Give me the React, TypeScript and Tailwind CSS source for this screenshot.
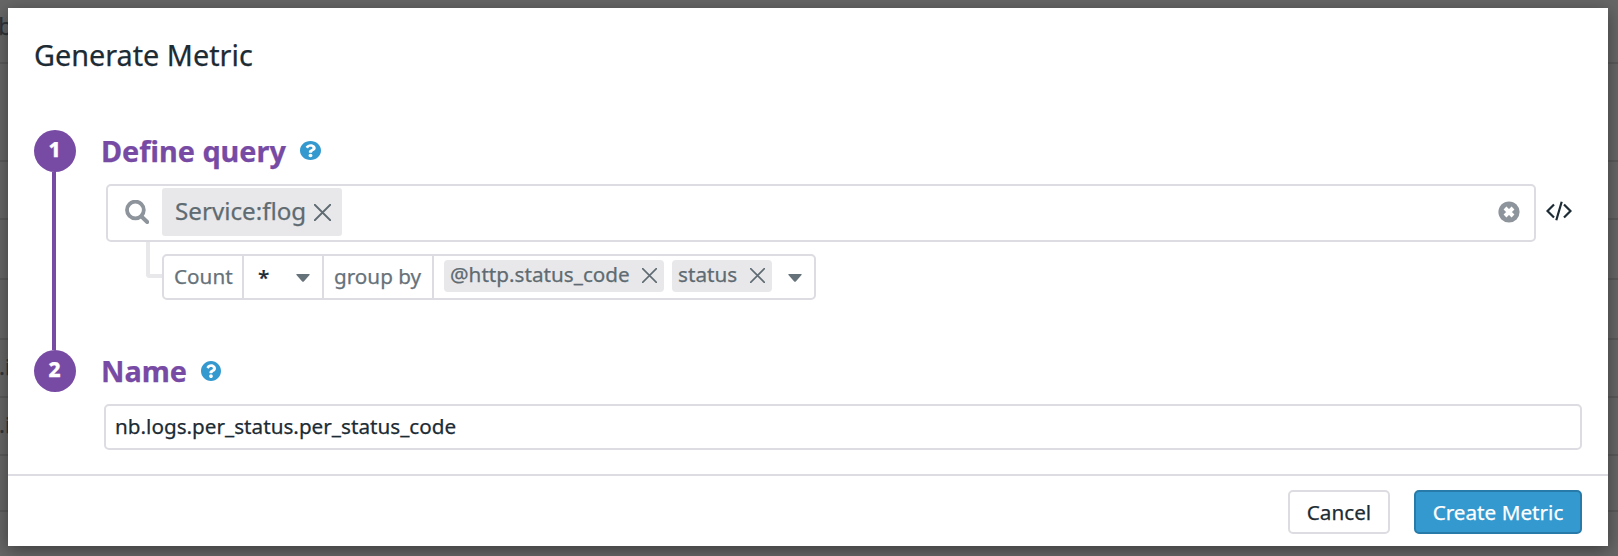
import type { ReactNode } from "react";

function Close({ className }: { className: string }) {
  return (
    <svg viewBox="0 0 16 16" className={className} fill="none" stroke="#5f6b72" strokeWidth="1.7" strokeLinecap="round">
      <path d="M0.7 0.7 15.3 15.3M15.3 0.7 0.7 15.3" />
    </svg>
  );
}

function Caret({ className }: { className: string }) {
  return (
    <svg viewBox="0 0 14 8" className={className} fill="#66727a">
      <path d="M1 0h12q1.3 0 .5 1L8 7.3q-1 1-2 0L.5 1Q-.3 0 1 0z" />
    </svg>
  );
}

function Help({ className }: { className: string }) {
  return (
    <svg viewBox="8 8 496 496" preserveAspectRatio="none" className={className} fill="#3399cf">
      <path d="M504 256c0 136.997-111.043 248-248 248S8 392.997 8 256C8 119.083 119.043 8 256 8s248 111.083 248 248zM262.655 90c-54.497 0-89.255 22.957-116.549 63.758-3.536 5.286-2.353 12.415 2.715 16.258l34.699 26.31c5.205 3.947 12.621 3.008 16.665-2.122 17.864-22.658 30.113-35.797 57.303-35.797 20.429 0 45.698 13.148 45.698 32.958 0 14.976-12.363 22.667-32.534 33.976C247.128 238.528 216 254.941 216 296v4c0 6.627 5.373 12 12 12h56c6.627 0 12-5.373 12-12v-1.333c0-28.462 83.186-29.647 83.186-106.667 0-58.002-60.165-102-116.531-102zM256 338c-25.365 0-46 20.635-46 46 0 25.364 20.635 46 46 46s46-20.636 46-46c0-25.365-20.635-46-46-46z" />
    </svg>
  );
}

function Step({ n, children }: { n: string; children?: ReactNode }) {
  return (
    <div className="flex w-[42px] shrink-0 flex-col items-center">
      <div className="flex h-[42px] w-[42px] shrink-0 items-center justify-center rounded-full bg-[#774aa4] pb-[4px] pr-[1px] text-[21px] font-extrabold leading-none text-white">
        {n}
      </div>
      {children}
    </div>
  );
}

export default function App() {
  return (
    <div className="relative h-[556px] w-full overflow-hidden bg-[#666666] p-2 font-['Noto_Sans',sans-serif] text-[#1c2b34] [-webkit-text-stroke:0.25px]">
      <div className="absolute inset-0 text-[24px] text-[#2f3438]">
        <div className="absolute left-0 top-[62px] h-[2px] w-full bg-[#5a5a5a]" />
        <div className="absolute left-0 top-[160px] h-[2px] w-full bg-[#5a5a5a]" />
        <div className="absolute left-0 top-[218px] h-[2px] w-full bg-[#5a5a5a]" />
        <div className="absolute left-0 top-[278px] h-[2px] w-full bg-[#5a5a5a]" />
        <div className="absolute left-0 top-[338px] h-[2px] w-full bg-[#5a5a5a]" />
        <div className="absolute left-0 top-[396px] h-[2px] w-full bg-[#5a5a5a]" />
        <div className="absolute left-0 top-[454px] h-[2px] w-full bg-[#5a5a5a]" />
        <div className="absolute left-0 top-[510px] h-[2px] w-full bg-[#5a5a5a]" />
        <span className="absolute left-[-2px] top-[8px]">b</span>
        <span className="absolute left-[-1px] top-[350px] text-[22px]">.i</span>
        <span className="absolute left-[-1px] top-[408px] text-[22px]">.i</span>
      </div>

      <div className="relative flex h-[538px] w-[1600px] flex-col bg-white shadow-[0_4px_16px_rgba(0,0,0,0.4)]">
        <h1 className="ml-[26px] mt-[27px] h-[41px] whitespace-nowrap text-[28.8px] leading-[40px]">Generate Metric</h1>

        <section className="mt-[54px] flex h-[220px] shrink-0 pl-[26px]">
          <Step n="1">
            <div className="mr-[2px] w-[4px] grow bg-[#774aa4]" />
          </Step>
          <div className="flex grow flex-col pl-[26px]">
            <div className="flex h-[42px] items-center">
              <h2 className="-ml-px w-[199px] whitespace-nowrap text-[28.8px] font-bold leading-[42px] text-[#774aa4]">Define query</h2>
              <Help className="mb-px h-[19px] w-[21px]" />
            </div>
            <div className="mt-[12px] flex items-center pl-[4px]">
              <div className="flex h-[58px] w-[1430px] items-center rounded-[5px] border-2 border-[#dcdce2] pl-[17px]">
                <svg viewBox="0 0 24 24" className="mb-[2px] h-[24px] w-[24px]" fill="none" stroke="#8e949b">
                  <circle cx="10.4" cy="10" r="8.4" strokeWidth="3.8" />
                  <path d="m16.5 16.5 5.7 5.5" strokeWidth="4" strokeLinecap="round" />
                </svg>
                <div className="mb-[2px] ml-[13px] flex h-[48px] w-[180px] items-center rounded-[3px] bg-[#e8e8ea] pl-[13px] text-[24.2px] leading-[46px] text-[#5f6b72]">
                  <span className="mb-[2px] w-[139px]">Service:flog</span>
                  <Close className="h-[17px] w-[17px]" />
                </div>
                <svg viewBox="0 0 22 22" className="mb-[2px] ml-auto mr-[14px] h-[22px] w-[22px]">
                  <circle cx="11" cy="11" r="10.6" fill="#8e949b" />
                  <path d="m7 7 8 8M15 7l-8 8" stroke="#fff" strokeWidth="4" />
                </svg>
              </div>
              <svg viewBox="0 0 26 20" className="mb-[4px] ml-[10px] h-[20px] w-[26px]" fill="none" stroke="#1c2b34" strokeWidth="2.2">
                <path d="M8 3.5 1.5 10 8 16.5M18 3.5l6.5 6.5-6.5 6.5M15.7.8l-5.4 18.4" />
              </svg>
            </div>
            <div className="flex pl-[44px]">
              <div className="h-[36px] w-[16px] rounded-bl-[4px] border-b-4 border-l-4 border-[#e8e8ea]" />
              <div className="mt-[12px] flex h-[46px] w-[654px] rounded-[5px] border-2 border-[#dcdce2] text-[20.7px] leading-[41px] text-[#66727a]">
                <div className="w-[80px] border-r-2 border-[#dcdce2] pl-[10px]">Count</div>
                <div className="flex w-[80px] items-center border-r-2 border-[#dcdce2] pl-[14px] text-[#1c2b34]">
                  <span className="w-[38px] font-medium">*</span>
                  <Caret className="mt-[2px] h-[8px] w-[14px]" />
                </div>
                <div className="w-[110px] whitespace-nowrap border-r-2 border-[#dcdce2] pl-[10px]">group by</div>
                <div className="flex grow items-center pl-[10px] text-[#5f6b72]">
                  <div className="mb-[2px] flex h-[32px] w-[220px] items-center rounded-[4px] bg-[#e8e8ea] pl-[6px] leading-[28px]">
                    <span className="mb-[4px] w-[192px]">@http.status_code</span>
                    <Close className="mb-[2px] h-[15px] w-[15px]" />
                  </div>
                  <div className="mb-[2px] ml-[8px] flex h-[32px] w-[100px] items-center rounded-[4px] bg-[#e8e8ea] pl-[6px] leading-[28px]">
                    <span className="mb-[4px] w-[72px]">status</span>
                    <Close className="mb-[2px] h-[15px] w-[15px]" />
                  </div>
                  <Caret className="ml-[16px] mt-[2px] h-[8px] w-[14px]" />
                </div>
              </div>
            </div>
          </div>
        </section>

        <section className="flex h-[100px] shrink-0 pl-[26px]">
          <Step n="2" />
          <div className="flex grow flex-col pl-[26px]">
            <div className="flex h-[42px] items-center">
              <h2 className="-ml-px w-[100px] text-[28.8px] font-bold leading-[42px] text-[#774aa4]">Name</h2>
              <Help className="mb-px h-[20px] w-[20px]" />
            </div>
            <div className="ml-[2px] mt-[12px] h-[46px] w-[1478px] rounded-[5px] border-2 border-[#dcdce2] pl-[9px] text-[20.7px] leading-[41px]">
              nb.logs.per_status.per_status_code
            </div>
          </div>
        </section>

        <footer className="mt-[24px] flex h-[72px] shrink-0 gap-[24px] border-t-2 border-[#dcdce2] pl-[1280px] pt-[14px] text-[20.7px]">
          <button className="h-[44px] w-[102px] rounded-[5px] border-2 border-[#dcdce2] leading-[40px]">Cancel</button>
          <button className="h-[44px] w-[168px] whitespace-nowrap rounded-[5px] border-2 border-[#287ba8] bg-[#3399cf] leading-[40px] text-white">Create Metric</button>
        </footer>
      </div>
    </div>
  );
}
